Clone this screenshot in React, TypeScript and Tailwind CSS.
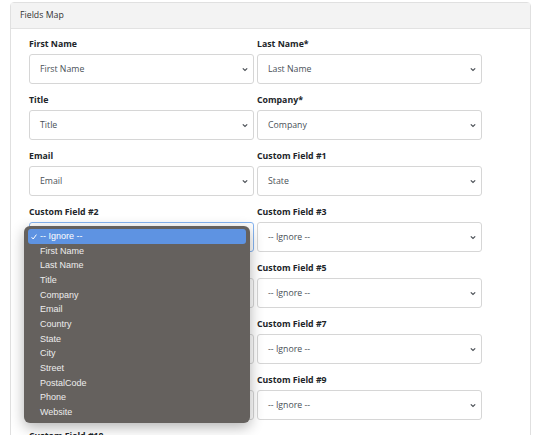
import { useState } from 'react';

type Field = { label: string; value: string };

const rows: [Field, Field | null][] = [
  [{ label: 'First Name', value: 'First Name' }, { label: 'Last Name*', value: 'Last Name' }],
  [{ label: 'Title', value: 'Title' }, { label: 'Company*', value: 'Company' }],
  [{ label: 'Email', value: 'Email' }, { label: 'Custom Field #1', value: 'State' }],
  [{ label: 'Custom Field #2', value: '-- Ignore --' }, { label: 'Custom Field #3', value: '-- Ignore --' }],
  [{ label: 'Custom Field #4', value: '-- Ignore --' }, { label: 'Custom Field #5', value: '-- Ignore --' }],
  [{ label: 'Custom Field #6', value: '-- Ignore --' }, { label: 'Custom Field #7', value: '-- Ignore --' }],
  [{ label: 'Custom Field #8', value: '-- Ignore --' }, { label: 'Custom Field #9', value: '-- Ignore --' }],
  [{ label: 'Custom Field #10', value: '-- Ignore --' }, null],
];

const options = [
  '-- Ignore --',
  'First Name',
  'Last Name',
  'Title',
  'Company',
  'Email',
  'Country',
  'State',
  'City',
  'Street',
  'PostalCode',
  'Phone',
  'Website',
];

function Chevron() {
  return (
    <svg width="6" height="5" viewBox="0 0 6 5" className="shrink-0">
      <path d="M0.8 1.4 L3 3.5 L5.2 1.4" fill="none" stroke="#4a4f55" strokeWidth="1.2" />
    </svg>
  );
}

function OptionList() {
  return (
    <div className="absolute left-[-5px] top-[4px] z-20 w-[226px] rounded-[6px] bg-[#65615e] px-[4px] py-[3px] shadow-[0_4px_14px_rgba(0,0,0,0.3)] font-['Liberation_Sans',Arial,sans-serif] text-[9px] text-[#ededed]">
      {options.map((opt, i) => (
        <div
          key={opt}
          className={`relative flex h-[14.67px] items-center pl-[12px] pt-[1px] ${i === 0 ? 'rounded-[3px] bg-[#5e93e2] text-white' : ''}`}
        >
          {i === 0 && (
            <svg width="6" height="6" viewBox="0 0 6 6" className="absolute left-[3px] top-[4.5px]">
              <path d="M0.6 3.2 L2.2 5 L5.4 0.6" fill="none" stroke="#ffffff" strokeWidth="1" />
            </svg>
          )}
          {opt}
        </div>
      ))}
    </div>
  );
}

function SelectField({ field, open }: { field: Field; open?: boolean }) {
  return (
    <div className="h-[56px]">
      <div className="mb-[4px] h-[12px] text-[8.75px] font-bold leading-[12px] text-[#212529]">{field.label}</div>
      <div className="relative">
        <div
          className={`flex h-[30px] items-center justify-between rounded-[3px] border bg-white pl-[10px] pr-[5px] pt-[1px] text-[8.75px] text-[#495057] ${
            open ? 'border-[#86b5f2]' : 'border-[#d6d6d6]'
          }`}
        >
          <span>{field.value}</span>
          <Chevron />
        </div>
        {open && <OptionList />}
      </div>
    </div>
  );
}

export default function App() {
  const [openField] = useState('Custom Field #2');

  return (
    <div className="min-h-screen overflow-hidden bg-white pl-[10px] pt-[2px] font-['Open_Sans',sans-serif]">
      <div className="w-[521px] rounded-[4px] border border-[#e0e0e0] bg-white">
        <div className="flex h-[26px] items-center border-b border-[#e2e2e2] bg-[#f3f3f3] px-[9px] text-[8.75px] text-[#333]">
          Fields Map
        </div>
        <div className="grid grid-cols-[225px_225px] gap-x-[3px] pl-[18px] pt-[9px]">
          {rows.map(([left, right]) => (
            <div key={left.label} className="contents">
              <SelectField field={left} open={left.label === openField} />
              {right ? <SelectField field={right} /> : <div />}
            </div>
          ))}
        </div>
      </div>
    </div>
  );
}
